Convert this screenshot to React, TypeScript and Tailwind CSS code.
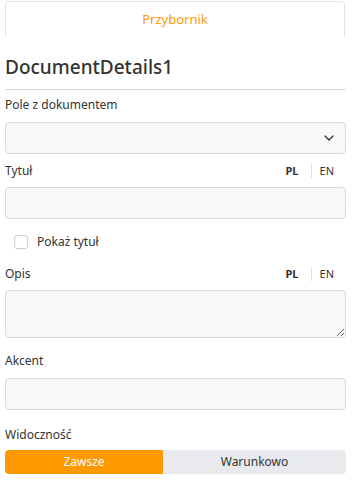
import { ChevronDown } from "lucide-react";

function LangSwitch() {
  return (
    <div className="flex items-center text-[11px] text-[#333]">
      <span className="font-bold px-1">PL</span>
      <span className="mx-2 h-[14px] w-px bg-[#e0e0e0]" />
      <span className="pr-3">EN</span>
    </div>
  );
}

function Label({ children, lang }: { children: React.ReactNode; lang?: boolean }) {
  return (
    <div className="flex items-center justify-between h-[18px] text-[12px] text-[#333]">
      <span>{children}</span>
      {lang && <LangSwitch />}
    </div>
  );
}

const box = "w-full rounded-[4px] border border-[#d7d9dc] bg-[#f7f8fa]";

export default function App() {
  return (
    <div
      className="w-[353px] h-[484px] bg-white overflow-hidden pl-[5px] pr-[7px] pt-px"
      style={{ fontFamily: '"Noto Sans", "Open Sans", sans-serif' }}
    >
      <div className="h-[36px] mr-[1px] border border-b-0 border-[#e6e6e6] rounded-t-[4px] flex items-center justify-center text-[13px] text-[#ff9900]">
        Przybornik
      </div>

      <h1 className="mt-[16px] text-[19px] font-medium text-[#333] leading-[28px]">DocumentDetails1</h1>
      <div className="mt-[8px] h-px bg-[#d5d6d8]" />

      <div className="mt-[6px]">
        <Label>Pole z dokumentem</Label>
        <div className={`${box} mt-[8px] h-[32px] flex items-center justify-end pr-2`}>
          <ChevronDown size={16} strokeWidth={2} className="text-[#333]" />
        </div>
      </div>

      <div className="mt-[8px]">
        <Label lang>Tytuł</Label>
        <div className={`${box} mt-[7px] h-[32px]`} />
      </div>

      <div className="mt-[15px] flex items-center pl-[9px] h-[16px]">
        <div className="w-[14px] h-[14px] rounded-[3px] border border-[#c9cbce] bg-white" />
        <span className="ml-[9px] text-[12px] text-[#333]">Pokaż tytuł</span>
      </div>

      <div className="mt-[15px]">
        <Label lang>Opis</Label>
        <textarea className={`${box} mt-[7px] h-[48px] block resize-y outline-none`} />
      </div>

      <div className="mt-[14px]">
        <Label>Akcent</Label>
        <div className={`${box} mt-[8px] h-[32px]`} />
      </div>

      <div className="mt-[16px]">
        <Label>Widoczność</Label>
        <div className="mt-[6px] flex h-[24px] rounded-[4px] overflow-hidden text-[12px]">
          <div className="w-[158px] bg-[#ff9900] text-white flex items-center justify-center">Zawsze</div>
          <div className="flex-1 bg-[#e8eaed] text-[#333] flex items-center justify-center">Warunkowo</div>
        </div>
      </div>
    </div>
  );
}
